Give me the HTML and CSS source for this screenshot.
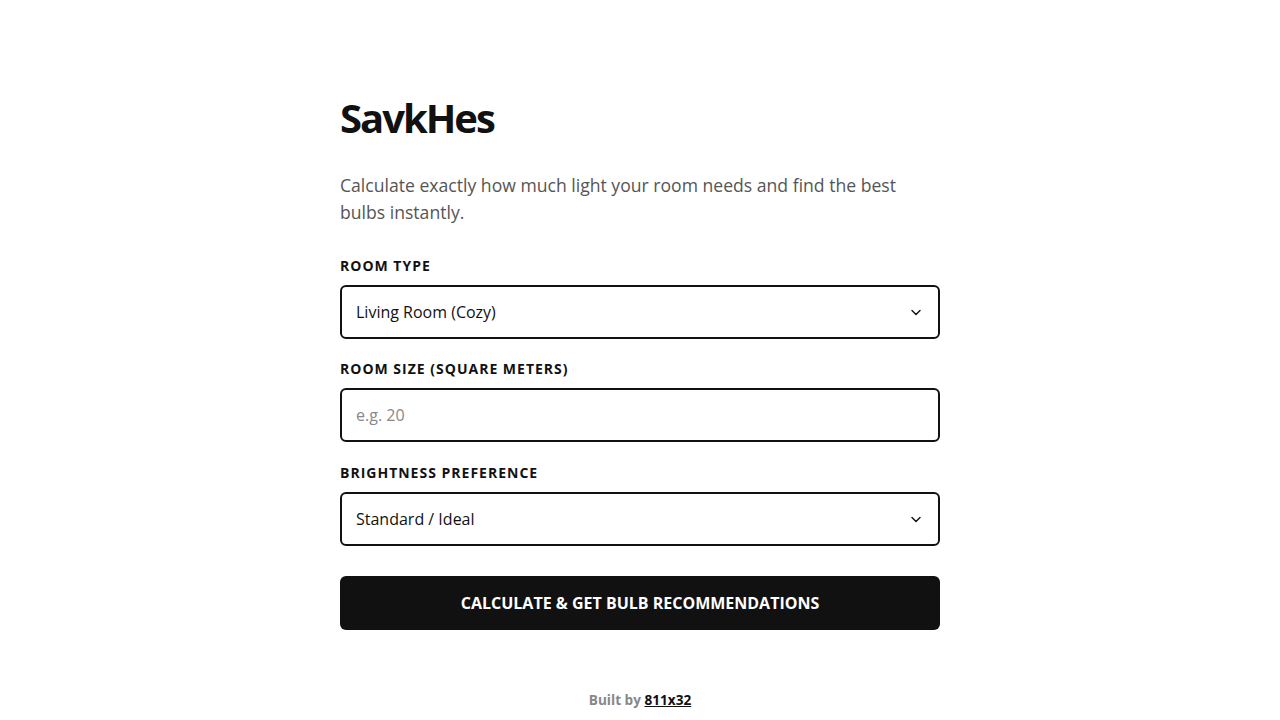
FILE: index.html
```html
<!DOCTYPE html>
<html lang="en">
<head>
    <meta charset="UTF-8">
    <meta name="viewport" content="width=device-width, initial-scale=1.0">
    <title>SavkHes</title>
    <link rel="stylesheet" href="styles.css">
</head>
<body>
    <main class="wrap">
        <h1 class="title">SavkHes</h1>
        <p class="intro">Calculate exactly how much light your room needs and find the best bulbs instantly.</p>

        <form id="lightForm" class="calc">
            <label for="roomType">Room Type</label>
            <div class="select-box">
                <select id="roomType" name="roomType">
                    <option>Living Room (Cozy)</option>
                    <option>Kitchen</option>
                    <option>Bedroom</option>
                    <option>Office / Study</option>
                    <option>Bathroom</option>
                </select>
                <svg class="chevron" width="12" height="12" viewBox="0 0 12 12" aria-hidden="true">
                    <path d="M2 4.5 L6 8.5 L10 4.5" fill="none" stroke="#111" stroke-width="1.4" stroke-linecap="round" stroke-linejoin="round"/>
                </svg>
            </div>

            <label for="roomSize">Room Size (Square Meters)</label>
            <input type="number" id="roomSize" name="roomSize" placeholder="e.g. 20" step="any">

            <label for="brightness">Brightness Preference</label>
            <div class="select-box">
                <select id="brightness" name="brightness">
                    <option>Standard / Ideal</option>
                    <option>Dim / Relaxed</option>
                    <option>Bright / Task</option>
                </select>
                <svg class="chevron" width="12" height="12" viewBox="0 0 12 12" aria-hidden="true">
                    <path d="M2 4.5 L6 8.5 L10 4.5" fill="none" stroke="#111" stroke-width="1.4" stroke-linecap="round" stroke-linejoin="round"/>
                </svg>
            </div>

            <button type="submit">Calculate &amp; Get Bulb Recommendations</button>
        </form>

        <footer class="credit">Built by <a href="#">811x32</a></footer>
    </main>
</body>
</html>
```

FILE: styles.css
```css
* {
    box-sizing: border-box;
}
body {
    margin: 0;
    font-family: "Open Sans", "Noto Sans", sans-serif;
    background: #fff;
    color: #111;
}
.wrap {
    max-width: 600px;
    margin: 0 auto;
    padding: 88px 0 0;
}
.title {
    margin: 0;
    font-size: 40px;
    font-weight: 700;
    letter-spacing: -2px;
    line-height: 60px;
    color: #111;
}
.intro {
    margin: 24px 0 30px;
    font-size: 17.6px;
    line-height: 27px;
    color: #555;
}
.calc {
    display: flex;
    flex-direction: column;
}
label {
    font-size: 14px;
    font-weight: 700;
    line-height: 20px;
    letter-spacing: 1px;
    text-transform: uppercase;
    margin-bottom: 9px;
}
.select-box {
    position: relative;
    margin-bottom: 20px;
}
select,
input[type="number"] {
    display: block;
    width: 100%;
    height: 54px;
    padding: 0 14px;
    border: 2px solid #111;
    border-radius: 6px;
    background: #fff;
    font-family: inherit;
    font-size: 16px;
    color: #111;
    appearance: none;
    -webkit-appearance: none;
    outline: none;
}
input[type="number"] {
    margin-bottom: 21px;
    -moz-appearance: textfield;
}
input::-webkit-outer-spin-button,
input::-webkit-inner-spin-button {
    -webkit-appearance: none;
    margin: 0;
}
input::placeholder {
    color: #888;
}
.chevron {
    position: absolute;
    right: 18px;
    top: 21px;
    pointer-events: none;
}
button {
    margin-top: 10px;
    height: 54px;
    border: none;
    border-radius: 6px;
    background: #111;
    color: #fff;
    font-family: inherit;
    font-size: 16px;
    font-weight: 700;
    text-transform: uppercase;
    cursor: pointer;
}
.credit {
    margin-top: 60px;
    text-align: center;
    font-size: 13.6px;
    font-weight: 700;
    color: #888;
}
.credit a {
    color: #111;
}
```
